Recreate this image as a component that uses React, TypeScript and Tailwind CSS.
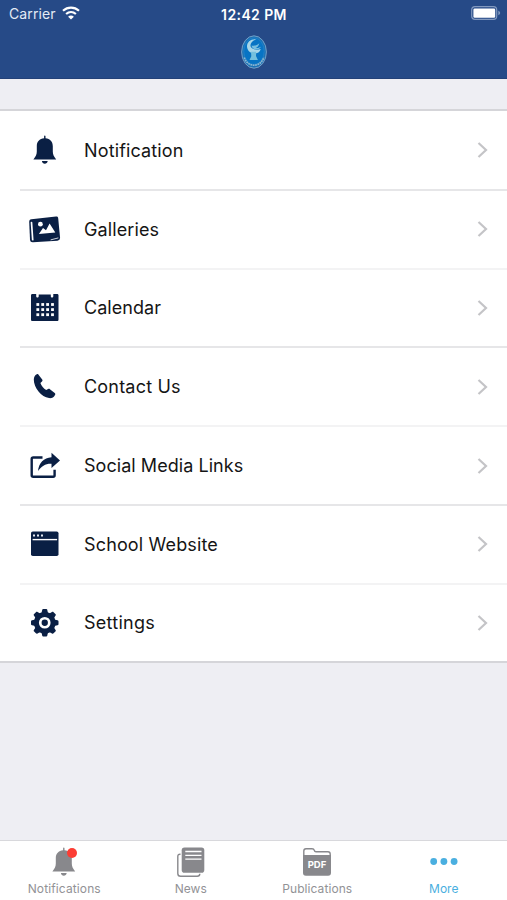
import React from "react";
import clsx from "clsx";

const BellIcon: React.FC<{ className?: string }> = ({ className }) => (
	<svg viewBox="0 0 32 32" fill="currentColor" className={className}>
		<path d="M15.1 2.2c0-1.100 1.400-1.100 1.400 0v2.100c4.600.4 7.300 3.500 7.300 7.900v5.200c0 3 1 4.800 3.400 8.100H4.400c2.400-3.300 3.400-5.100 3.400-8.100v-5.200c0-4.400 2.700-7.500 7.300-7.900z" />
		<path d="M12.900 27h5.800c-.3 1.700-1.400 2.800-2.900 2.800s-2.600-1.100-2.900-2.800z" />
	</svg>
);

const GalleryIcon: React.FC = () => (
	<svg viewBox="0 0 32 32" fill="none" className="size-8">
		<path d="M2.400 6.200 27 3.500c1.500-.1 2 .4 2.200 1.700l1.800 19c.1 2.100-.8 3.200-2.700 3.500L4 29.300c-2 .1-2.700-.7-3-2.500L.2 9C.2 7.300.8 6.400 2.400 6.200z" fill="#0a1f44" />
		<path d="M2.500 9.500 3.700 26.700" stroke="#fff" strokeWidth="1.700" strokeLinecap="round" />
		<path d="m22 26.800 7-1.800" stroke="#fff" strokeWidth=".8" strokeLinecap="round" />
		<circle cx="11.400" cy="11.200" r="2.400" fill="#fff" />
		<path d="m9.900 21 4.100-6 3 2.200 3.600-6.700 5.700 9z" fill="#fff" />
	</svg>
);

const CalendarIcon: React.FC = () => (
	<svg viewBox="0 0 32 32" className="size-8">
		<path d="M3.500 2h3.700v2.300c0 1.700 2.500 1.700 2.500 0V2.600h12.100v1.700c0 1.700 2.500 1.700 2.500 0V2H28c1 0 1.500.5 1.500 1.500v24c0 1-.5 1.500-1.500 1.500H3.500C2.500 29 2 28.500 2 27.500v-24C2 2.500 2.500 2 3.500 2z" fill="#0a1f44" />
		{[11.1, 16.2, 21.3].map((y) =>
			[7.4, 12.3, 17.2, 22.1].map((x) => (
				<rect key={`${x}-${y}`} x={x} y={y} width="2.800" height="2.800" fill="#fff" />
			)),
		)}
	</svg>
);

const PhoneIcon: React.FC = () => (
	<svg viewBox="0 0 32 32" className="size-8">
		<path d="M4.800 8.500c.1-2.400 1.200-4.300 3-5.200.8-.4 1.500-.2 1.900.6l3.500 4.500c.5.800.4 1.500-.2 2l-1.600 1.500c.9 2.500 3.300 5.600 5.800 7.200l1.900-1c.7-.4 1.300-.3 1.800.2l4.800 3.600c.7.600.8 1.200.3 2-1.300 2.500-3.500 3.600-6 3.200C12.500 26.200 4.700 16.500 4.800 8.500z" fill="#0a1f44" />
	</svg>
);

const ShareIcon: React.FC = () => (
	<svg viewBox="0 0 32 32" fill="none" className="size-8">
		<path d="M13.500 7.500H4.200c-1 0-1.500.5-1.500 1.500v16.300c0 1 .5 1.500 1.500 1.500h19.900c1 0 1.500-.5 1.500-1.500v-5.500" stroke="#0a1f44" strokeWidth="2.400" />
		<path d="M22.500 2.800 31 10.400l-8.500 7.600v-4.300c-5.900-.3-10 2.400-13.500 7.300.8-8.100 5.800-13.300 13.500-13.800z" fill="#0a1f44" />
	</svg>
);

const BrowserIcon: React.FC = () => (
	<svg viewBox="0 0 32 32" className="size-8">
		<rect x="2" y="3.500" width="27.500" height="24.500" rx="1.800" fill="#0a1f44" />
		<path d="M3.600 11.600h24.500" stroke="#fff" strokeWidth="1.400" />
		<path d="M4 6.400h2v2H4zm4 0h2v2H8zm4 0h2v2h-2z" fill="#e5eaf2" />
	</svg>
);

const GearIcon: React.FC = () => (
	<svg viewBox="0 0 32 32" className="size-8">
		<g fill="#0a1f44">
			<circle cx="15.750" cy="15.750" r="10.800" />
			{[0, 45, 90, 135, 180, 225, 270, 315].map((angle) => (
				<path key={angle} d="M12.400 6.500 13.200 3c.2-.8.6-1 1.300-1H17c.7 0 1.100.2 1.300 1l.8 3.500z" transform={`rotate(${angle} 15.750 15.750)`} />
			))}
		</g>
		<circle cx="15.750" cy="15.750" r="4.500" fill="none" stroke="#fff" strokeWidth="2.700" />
	</svg>
);

const NewsIcon: React.FC = () => (
	<svg viewBox="0 0 32 32" fill="none" className="size-8">
		<path d="M5.500 8.200H5c-1.500 0-2.200.7-2.200 2.200v17c0 1.900.9 2.800 2.800 2.800h16.600c1.700 0 2.600-.8 2.600-2.500" stroke="#88888c" strokeWidth="1.400" />
		<rect x="6.700" y="1.500" width="22.600" height="25.200" rx="2.800" fill="#88888c" />
		<path d="M10.300 5.500h16.200M10.300 9.300h16.200M10.300 13.100h16.200" stroke="#fff" strokeWidth="1.300" />
	</svg>
);

const PdfIcon: React.FC = () => (
	<svg viewBox="0 0 32 32" className="size-8">
		<path d="M2.800 10V5c0-1.500.7-2.300 2.200-2.300h6c1.500 0 2 .4 2.300 1.700.2.900.7 1.300 1.700 1.300h12c1.500 0 2.200.8 2.200 2.300v2" fill="#fff" stroke="#88888c" strokeWidth="1.400" />
		<path d="M2 8.900h28v17.900c0 2-.9 2.900-2.900 2.900H4.900C2.900 29.700 2 28.800 2 26.800z" fill="#88888c" />
		<text x="16" y="21.800" textAnchor="middle" fill="#fff" fontSize="9.500" fontWeight="700" fontFamily="Inter, sans-serif" textLength="18.500">PDF</text>
	</svg>
);

const MoreIcon: React.FC = () => (
	<svg viewBox="0 0 32 32" fill="#4aafe0" className="size-8">
		<circle cx="5.700" cy="15.500" r="3.400" />
		<circle cx="15.900" cy="15.500" r="3.400" />
		<circle cx="26.100" cy="15.500" r="3.400" />
	</svg>
);

const Crest: React.FC = () => (
	<svg viewBox="0 0 26 34" fill="none" className="h-[34px] w-[26px]">
		<ellipse cx="13" cy="17" rx="12.400" ry="16.200" fill="#1c72b5" stroke="#7ea5c8" strokeWidth=".9" />
		<ellipse cx="13" cy="16.200" rx="10.200" ry="13.300" fill="#0874c4" stroke="#2d88cb" strokeWidth=".6" />
		<path d="M15.500 4.300C10 3.300 5.800 7 6 11.500c.3 4.200 3.300 7.200 8 7 3.100-.2 5.200-1.800 5.700-4.500-4 1.400-8.200.7-9.800-1.900-1.500-2.700.8-6.400 5.600-7.800z" fill="#a9d6e8" />
		<path d="M10.500 10.500c2 .9 5.500.1 7.800-2.300-.4 2.300-1.700 3.900-3.500 4.700 2 .1 3.600-.3 5-1.200-.8 2.200-2.700 3-5.300 2.700-1.900-.2-3.700-1.500-4-3.900z" fill="#79bfe0" />
		<path d="M10 16.700h5.200l-.2 4.300 1.900 4H8.500l1.800-3.800z" fill="#75c0dd" />
		<path d="M3.200 22.500c3.500 10.300 16.100 10.300 19.600 0" stroke="#8db8d2" strokeWidth="1.700" strokeDasharray="1.800 .6" />
	</svg>
);

const WifiIcon: React.FC = () => (
	<svg viewBox="0 0 18 14" fill="none" className="h-3.5 w-[18px] -translate-y-px">
		<path d="M1 4.700c4.700-4.200 11.300-4.200 16 0M4.100 8c2.900-2.500 6.900-2.500 9.800 0" stroke="#fff" strokeWidth="2.200" />
		<path d="M6.100 10.700c1.700-1.500 4.100-1.500 5.800 0L9 13.600z" fill="#fff" />
	</svg>
);

const BatteryIcon: React.FC = () => (
	<svg viewBox="0 0 30 14" fill="none" className="h-3.5 w-[30px] -translate-y-px">
		<rect x=".7" y=".7" width="25" height="12.600" rx="3.300" stroke="#8299bf" strokeWidth="1.200" />
		<rect x="2.400" y="2.400" width="21.800" height="9.400" rx="1.300" fill="#fff" />
		<path d="M27.300 4.800c2.400.7 2.400 3.700 0 4.400z" fill="#8299bf" />
	</svg>
);

const menu = [
	{ label: "Notification", spacing: "tracking-[0.14px]", icon: <BellIcon className="size-8" /> },
	{ label: "Galleries", spacing: "tracking-[0.12px]", icon: <GalleryIcon /> },
	{ label: "Calendar", spacing: "tracking-[0.04px]", icon: <CalendarIcon /> },
	{ label: "Contact Us", spacing: "tracking-[0.2px]", icon: <PhoneIcon /> },
	{ label: "Social Media Links", spacing: "tracking-[0.05px]", icon: <ShareIcon /> },
	{ label: "School Website", spacing: "tracking-[0.15px]", icon: <BrowserIcon /> },
	{ label: "Settings", spacing: "tracking-[0.26px]", icon: <GearIcon /> },
];

const tabs = [
	{ label: "Notifications", spacing: "tracking-[0.12px]", icon: <BellIcon className="size-8 text-[#88888c]" />, badge: true },
	{ label: "News", spacing: "tracking-normal", icon: <NewsIcon /> },
	{ label: "Publications", spacing: "tracking-[0.08px]", icon: <PdfIcon /> },
	{ label: "More", spacing: "tracking-normal", icon: <MoreIcon />, active: true },
];

export default function App() {
	return (
		<div className="flex h-[900px] w-[507px] flex-col overflow-hidden bg-[#eeeef3] font-['Inter',sans-serif]">
			{/* Status bar and crest */}
			<header className="h-[79px] shrink-0 border-b border-[#234178] bg-[#264a87] text-white">
				<div className="grid h-7 grid-cols-3 items-center pl-[9px] pr-[6px]">
					<div className="flex items-center gap-[6px] text-sm text-[#e4eaf5]">
						<span className="w-[47px] tracking-[0.1px]">Carrier</span>
						<WifiIcon />
					</div>
					<div className="-ml-0.5 text-center text-[14px] font-semibold tracking-[0.4px]">12:42 PM</div>
					<div className="flex justify-end">
						<BatteryIcon />
					</div>
				</div>
				<div className="mt-[7px] flex justify-center">
					<Crest />
				</div>
			</header>

			{/* Menu */}
			<ul className="mt-[30px] flex h-[554px] shrink-0 flex-col border-y-2 border-[#d5d5d9] bg-white pt-px">
				{menu.map((item, i) => (
					<li key={item.label} className={clsx("flex shrink-0 flex-col pl-5", i < menu.length - 1 ? "h-[78.800px]" : "h-[76px]")}>
						<div className="flex flex-1 items-center pl-[9px] pr-[17px] text-[#0a1f44]">
							{item.icon}
							<span className={clsx("ml-[23px] flex-1 text-[18px] text-[#151515]", item.spacing)}>{item.label}</span>
							<svg viewBox="0 0 14 18" fill="none" className="h-[18px] w-3.5">
								<path d="m2.500 2 7.500 7-7.500 7" stroke="#c4c4c7" strokeWidth="2.200" />
							</svg>
						</div>
						{i < menu.length - 1 && <div className={clsx("h-[2px]", i % 2 ? "bg-[#f3f3f4]" : "bg-[#e6e6e8]")} />}
					</li>
				))}
			</ul>

			{/* Tab bar */}
			<nav className="mt-auto grid h-[60px] shrink-0 grid-cols-4 border-t border-[#d8d8dc] bg-white pl-px">
				{tabs.map((tab) => (
					<div key={tab.label} className="flex flex-col items-center pt-[5px]">
						<div className="relative">
							{tab.icon}
							{tab.badge && <span className="absolute left-[19px] top-[2px] size-[10px] rounded-full bg-[#fc3d34]" />}
						</div>
						<span className={clsx("mt-[3px] text-xs leading-4", tab.spacing, tab.active ? "text-[#4aafe0]" : "text-[#929296]")}>{tab.label}</span>
					</div>
				))}
			</nav>
		</div>
	);
}
